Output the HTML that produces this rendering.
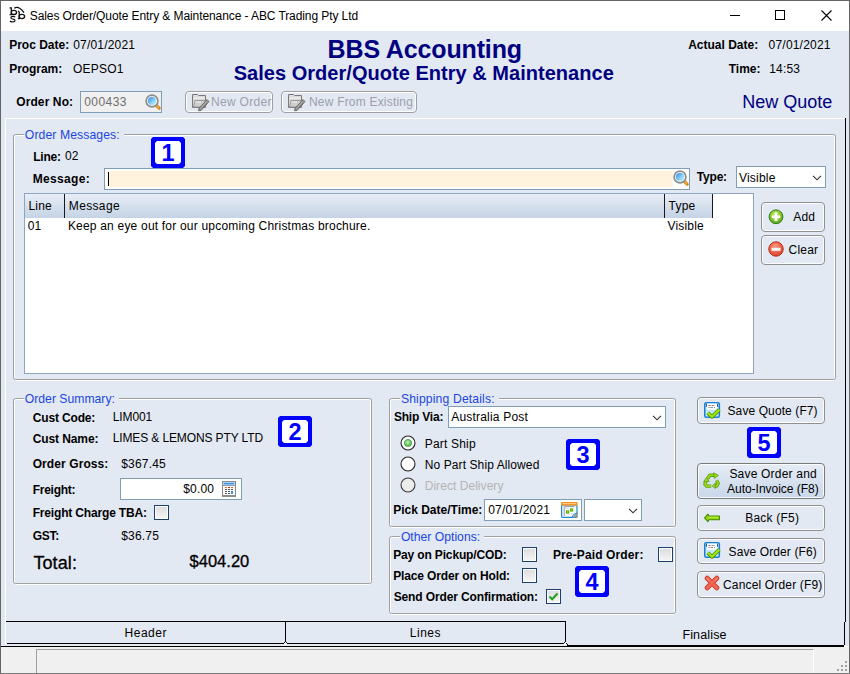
<!DOCTYPE html>
<html><head><meta charset="utf-8"><title>Sales Order</title><style>
html,body{margin:0;padding:0;}
body{width:850px;height:674px;position:relative;overflow:hidden;font-family:"Liberation Sans", sans-serif;background:#fff;}
.t{position:absolute;white-space:pre;line-height:1;font-family:"Liberation Sans", sans-serif;}
.badge{position:absolute;width:34px;height:31px;background:#0000ff;clip-path:polygon(2px 0,32px 0,34px 2px,34px 29px,32px 31px,2px 31px,0 29px,0 2px);}
.badge i{position:absolute;left:4px;top:4px;width:26px;height:23px;background:#fff;clip-path:polygon(2px 0,24px 0,26px 2px,26px 21px,24px 23px,2px 23px,0 21px,0 2px);}
.badge span{position:absolute;left:0;right:0;top:5px;text-align:center;font-family:"Liberation Sans", sans-serif;font-weight:bold;font-size:23.5px;line-height:23px;color:#0000ff;}
</style></head><body>
<div style="position:absolute;left:0px;top:0px;width:850px;height:674px;background:#fff;"></div>
<div style="position:absolute;left:1px;top:31px;width:848px;height:615px;background:#e3e9f3;"></div>
<div style="position:absolute;left:1px;top:647px;width:848px;height:26px;background:#f0f0f0;"></div>
<div style="position:absolute;left:0px;top:0px;width:850px;height:1px;background:#646464;"></div>
<div style="position:absolute;left:0px;top:0px;width:1px;height:674px;background:#646464;"></div>
<div style="position:absolute;left:849px;top:0px;width:1px;height:674px;background:#646464;"></div>
<div style="position:absolute;left:0px;top:673px;width:850px;height:1px;background:#7a7a7a;"></div>
<svg style="position:absolute;left:6px;top:4px" width="24" height="22" viewBox="0 0 24 22">
<g fill="none" stroke="#111" stroke-width="1.3">
<path d="M3.6 3.9 H5.3 V10.6 H3.6"/>
<ellipse cx="7.9" cy="8.4" rx="2.6" ry="2.1"/>
<path d="M13.2 7.4 H11.9 M13.2 7.4 V14.7 H11.9"/>
<ellipse cx="15.9" cy="12.5" rx="2.7" ry="2.1"/>
<path d="M8.2 4.3 Q12.5 1.2 18 8.6"/>
<path d="M9.2 13.1 Q8.2 12.3 6.6 12.4 Q4.6 12.7 5 14 Q5.6 15 8 15.4 Q9.3 16 8.8 17.1 Q8.2 18 6.2 17.9 Q4.6 17.8 3.9 17"/>
</g></svg>
<div class="t" style="left:29.80px;top:10px;font-size:12px;font-weight:normal;color:#000;letter-spacing:-0.09px;">Sales Order/Quote Entry &amp; Maintenance - ABC Trading Pty Ltd</div>
<div style="position:absolute;left:730px;top:15px;width:10px;height:1px;background:#000;"></div>
<div style="position:absolute;left:775px;top:10px;width:10px;height:10px;border:1px solid #000;box-sizing:border-box;"></div>
<svg style="position:absolute;left:820px;top:9px" width="13" height="13"><path d="M1.5 1.5 L11.5 11.5 M11.5 1.5 L1.5 11.5" stroke="#000" stroke-width="1.1"/></svg>
<div class="t" style="left:9.20px;top:39px;font-size:12px;font-weight:bold;color:#000;letter-spacing:0px;">Proc Date:</div>
<div class="t" style="left:73.20px;top:39px;font-size:12px;font-weight:normal;color:#000;letter-spacing:0.2px;">07/01/2021</div>
<div class="t" style="left:9.20px;top:63px;font-size:12px;font-weight:bold;color:#000;letter-spacing:-0.05px;">Program:</div>
<div class="t" style="left:73.00px;top:63px;font-size:12px;font-weight:normal;color:#000;letter-spacing:0.2px;">OEPSO1</div>
<div class="t" style="left:327.60px;top:37px;font-size:25px;font-weight:bold;color:#000080;letter-spacing:-0.14px;">BBS Accounting</div>
<div class="t" style="left:233.70px;top:63px;font-size:20px;font-weight:bold;color:#000080;letter-spacing:0.03px;">Sales Order/Quote Entry &amp; Maintenance</div>
<div class="t" style="left:688.20px;top:39px;font-size:12px;font-weight:bold;color:#000;letter-spacing:0px;">Actual Date:</div>
<div class="t" style="left:768.60px;top:39px;font-size:12px;font-weight:normal;color:#000;letter-spacing:0.2px;">07/01/2021</div>
<div class="t" style="left:728.70px;top:63px;font-size:12px;font-weight:bold;color:#000;letter-spacing:0px;">Time:</div>
<div class="t" style="left:769.20px;top:63px;font-size:12px;font-weight:normal;color:#000;letter-spacing:0.2px;">14:53</div>
<div class="t" style="left:742.20px;top:93px;font-size:18px;font-weight:normal;color:#000080;">New Quote</div>
<div class="t" style="left:16.20px;top:96px;font-size:12px;font-weight:bold;color:#000;letter-spacing:0.11px;">Order No:</div>
<div style="position:absolute;left:80px;top:91px;width:82px;height:22px;border:1px solid #7f9db9;background:#f0f0f0;box-sizing:border-box;"></div>
<div class="t" style="left:84.20px;top:96px;font-size:12px;font-weight:normal;color:#6d6d6d;letter-spacing:0.45px;">000433</div>
<svg style="position:absolute;left:144px;top:93px" width="18" height="18" viewBox="0 0 18 18">
<defs><linearGradient id="mg152" x1="0" y1="0" x2="1" y2="1"><stop offset="0" stop-color="#2f86dc"/><stop offset="0.6" stop-color="#8fd4f8"/><stop offset="1" stop-color="#c8f4ff"/></linearGradient></defs>
<path d="M12.3 12.3 L15.2 15.2" stroke="#d8861a" stroke-width="3.2" stroke-linecap="round"/>
<path d="M12.6 12.6 L14.6 14.6" stroke="#f4b040" stroke-width="1.4" stroke-linecap="round"/>
<circle cx="8" cy="8" r="5.9" fill="#fff" stroke="#8c8c8c" stroke-width="1.7"/>
<circle cx="8" cy="8" r="4.3" fill="url(#mg152)"/>
</svg>
<div style="position:absolute;left:185px;top:91px;width:88px;height:22px;border:1px solid #a0a0a0;border-radius:4px;box-sizing:border-box;box-shadow:inset 0 0 0 1px #fff;"></div>
<svg style="position:absolute;left:189px;top:92px" width="22" height="20" viewBox="0 0 22 20">
<path d="M3.5 2.5 H8.5 L9.5 3.5 H16.5 V15.5 H3.5 Z" fill="#dadada" stroke="#7a7a7a" stroke-width="1"/>
<path d="M5 6 H15.5" stroke="#f4f4f4" stroke-width="1.2"/>
<path d="M4.5 15 L6 8.5 H18.5 L16.5 15 Z" fill="#cdcdcd" stroke="#8a8a8a" stroke-width="0.8"/>
<path d="M6.5 10 H12" stroke="#f0f0f0" stroke-width="1"/>
<path d="M10 16.5 L18 7.5 L20 9.5 L12 18.5 L9.5 18.8 Z" fill="#8a8a8a" stroke="#5a5a5a" stroke-width="0.8"/>
<path d="M11 16.8 L18.8 8.4" stroke="#c8c8c8" stroke-width="0.8"/>
</svg>
<div class="t" style="left:211.00px;top:96px;font-size:12px;font-weight:normal;color:#9c9eac;letter-spacing:0.3px;">New Order</div>
<div style="position:absolute;left:281px;top:91px;width:136px;height:22px;border:1px solid #a0a0a0;border-radius:4px;box-sizing:border-box;box-shadow:inset 0 0 0 1px #fff;"></div>
<svg style="position:absolute;left:285px;top:92px" width="22" height="20" viewBox="0 0 22 20">
<path d="M3.5 2.5 H8.5 L9.5 3.5 H16.5 V15.5 H3.5 Z" fill="#dadada" stroke="#7a7a7a" stroke-width="1"/>
<path d="M5 6 H15.5" stroke="#f4f4f4" stroke-width="1.2"/>
<path d="M4.5 15 L6 8.5 H18.5 L16.5 15 Z" fill="#cdcdcd" stroke="#8a8a8a" stroke-width="0.8"/>
<path d="M6.5 10 H12" stroke="#f0f0f0" stroke-width="1"/>
<path d="M10 16.5 L18 7.5 L20 9.5 L12 18.5 L9.5 18.8 Z" fill="#8a8a8a" stroke="#5a5a5a" stroke-width="0.8"/>
<path d="M11 16.8 L18.8 8.4" stroke="#c8c8c8" stroke-width="0.8"/>
</svg>
<div class="t" style="left:309.00px;top:96px;font-size:12px;font-weight:normal;color:#9c9eac;letter-spacing:0.2px;">New From Existing</div>
<div style="position:absolute;left:5px;top:118px;width:841px;height:1px;background:#fff;"></div>
<div style="position:absolute;left:5px;top:118px;width:1px;height:526px;background:#fff;"></div>
<div style="position:absolute;left:845px;top:118px;width:1px;height:504px;background:#000;"></div>
<div style="position:absolute;left:14px;top:135px;width:821px;height:246px;border:1px solid #fff;border-radius:2.5px;box-sizing:border-box;"></div>
<div style="position:absolute;left:13px;top:134px;width:823px;height:246px;border:1px solid #a0a0a0;border-radius:2.5px;box-sizing:border-box;"></div>
<div style="position:absolute;left:23.6px;top:132px;width:100.4px;height:5px;background:#e3e9f3;"></div>
<div class="t" style="left:24.80px;top:129px;font-size:12.2px;font-weight:normal;color:#1c46e2;letter-spacing:0.1px;">Order Messages:</div>
<div class="t" style="left:33.20px;top:151px;font-size:12px;font-weight:bold;color:#000;letter-spacing:-0.2px;">Line:</div>
<div class="t" style="left:65.00px;top:150px;font-size:12px;font-weight:normal;color:#000;letter-spacing:0.2px;">02</div>
<div class="badge" style="left:151px;top:137px;"><i></i><span>1</span></div>
<div class="t" style="left:32.70px;top:173px;font-size:12px;font-weight:bold;color:#000;letter-spacing:0.34px;">Message:</div>
<div style="position:absolute;left:104px;top:168px;width:586px;height:22px;border:1px solid #7f9db9;background:#fff;box-sizing:border-box;"></div>
<div style="position:absolute;left:107px;top:171px;width:566px;height:16px;background:#fff3de;"></div>
<div style="position:absolute;left:108px;top:172px;width:1px;height:14px;background:#000;"></div>
<svg style="position:absolute;left:671.7px;top:169.4px" width="18" height="18" viewBox="0 0 18 18">
<defs><linearGradient id="mg679.7" x1="0" y1="0" x2="1" y2="1"><stop offset="0" stop-color="#2f86dc"/><stop offset="0.6" stop-color="#8fd4f8"/><stop offset="1" stop-color="#c8f4ff"/></linearGradient></defs>
<path d="M12.3 12.3 L15.2 15.2" stroke="#d8861a" stroke-width="3.2" stroke-linecap="round"/>
<path d="M12.6 12.6 L14.6 14.6" stroke="#f4b040" stroke-width="1.4" stroke-linecap="round"/>
<circle cx="8" cy="8" r="5.9" fill="#fff" stroke="#8c8c8c" stroke-width="1.7"/>
<circle cx="8" cy="8" r="4.3" fill="url(#mg679.7)"/>
</svg>
<div class="t" style="left:696.80px;top:171px;font-size:12px;font-weight:bold;color:#000;letter-spacing:-0.2px;">Type:</div>
<div style="position:absolute;left:736px;top:166px;width:90px;height:22px;border:1px solid #7f9db9;background:#fff;box-sizing:border-box;"></div>
<div class="t" style="left:739.00px;top:172px;font-size:12px;font-weight:normal;color:#000;letter-spacing:0.2px;">Visible</div>
<svg style="position:absolute;left:811px;top:174px" width="12" height="8"><path d="M2 1.8 L6 5.8 L10 1.8" fill="none" stroke="#333" stroke-width="1.15"/></svg>
<div style="position:absolute;left:24px;top:193px;width:730px;height:181px;border:1px solid #8da5c2;background:#fff;box-sizing:border-box;"></div>
<div style="position:absolute;left:25px;top:194px;width:688px;height:24px;background:linear-gradient(#e8eef7,#c4d3e5);"></div>
<div style="position:absolute;left:64px;top:194px;width:1px;height:24px;background:#1a1a1a;"></div>
<div style="position:absolute;left:664px;top:194px;width:1px;height:24px;background:#1a1a1a;"></div>
<div style="position:absolute;left:712px;top:194px;width:1px;height:24px;background:#1a1a1a;"></div>
<div class="t" style="left:28.50px;top:200px;font-size:12px;font-weight:normal;color:#000;letter-spacing:0.2px;">Line</div>
<div class="t" style="left:68.80px;top:200px;font-size:12px;font-weight:normal;color:#000;letter-spacing:0.35px;">Message</div>
<div class="t" style="left:668.60px;top:200px;font-size:12px;font-weight:normal;color:#000;letter-spacing:0.2px;">Type</div>
<div class="t" style="left:27.70px;top:220px;font-size:12px;font-weight:normal;color:#000;letter-spacing:0.2px;">01</div>
<div class="t" style="left:67.90px;top:220px;font-size:12px;font-weight:normal;color:#000;letter-spacing:0.2px;">Keep an eye out for our upcoming Christmas brochure.</div>
<div class="t" style="left:667.40px;top:220px;font-size:12px;font-weight:normal;color:#000;letter-spacing:0.2px;">Visible</div>
<div style="position:absolute;left:761px;top:202px;width:64px;height:30px;border:1px solid #909090;border-radius:4px;box-sizing:border-box;background:#e3e9f3;box-shadow:inset 0 0 0 1px #fbfcfe;"></div>
<svg style="position:absolute;left:768px;top:209px" width="16" height="16"><defs><radialGradient id="ga" cx="0.45" cy="0.35" r="0.65"><stop offset="0" stop-color="#c4f060"/><stop offset="1" stop-color="#58a818"/></radialGradient></defs>
<circle cx="8" cy="7.8" r="6.9" fill="url(#ga)" stroke="#2f7a0c" stroke-width="1"/><path d="M3.8 7.8 H12.2 M8 3.6 V12" stroke="#fff" stroke-width="2.8"/></svg>
<div class="t" style="left:793.20px;top:211px;font-size:12px;font-weight:normal;color:#000;letter-spacing:0.2px;">Add</div>
<div style="position:absolute;left:761px;top:235px;width:64px;height:30px;border:1px solid #909090;border-radius:4px;box-sizing:border-box;background:#e3e9f3;box-shadow:inset 0 0 0 1px #fbfcfe;"></div>
<svg style="position:absolute;left:767.6px;top:241.2px" width="16" height="16"><defs><radialGradient id="gc" cx="0.45" cy="0.35" r="0.65"><stop offset="0" stop-color="#ff9c84"/><stop offset="1" stop-color="#de3f28"/></radialGradient></defs>
<circle cx="8" cy="8" r="7.2" fill="url(#gc)" stroke="#b02c18" stroke-width="1"/><path d="M3.5 8.3 H12.5" stroke="#fff" stroke-width="3"/></svg>
<div class="t" style="left:788.60px;top:244px;font-size:12px;font-weight:normal;color:#000;letter-spacing:0.2px;">Clear</div>
<div style="position:absolute;left:14px;top:399px;width:357px;height:186px;border:1px solid #fff;border-radius:2.5px;box-sizing:border-box;"></div>
<div style="position:absolute;left:13px;top:398px;width:359px;height:186px;border:1px solid #a0a0a0;border-radius:2.5px;box-sizing:border-box;"></div>
<div style="position:absolute;left:23.6px;top:396px;width:95.8px;height:5px;background:#e3e9f3;"></div>
<div class="t" style="left:24.80px;top:393px;font-size:12.2px;font-weight:normal;color:#1c46e2;letter-spacing:0px;">Order Summary:</div>
<div class="t" style="left:32.70px;top:412px;font-size:12px;font-weight:bold;color:#000;letter-spacing:-0.15px;">Cust Code:</div>
<div class="t" style="left:112.70px;top:411px;font-size:12px;font-weight:normal;color:#000;letter-spacing:-0.1px;">LIM001</div>
<div class="t" style="left:32.70px;top:433px;font-size:12px;font-weight:bold;color:#000;letter-spacing:-0.1px;">Cust Name:</div>
<div class="t" style="left:112.70px;top:432px;font-size:12px;font-weight:normal;color:#000;letter-spacing:-0.12px;">LIMES &amp; LEMONS PTY LTD</div>
<div class="badge" style="left:278px;top:416px;"><i></i><span>2</span></div>
<div class="t" style="left:32.70px;top:458px;font-size:12px;font-weight:bold;color:#000;letter-spacing:0.09px;">Order Gross:</div>
<div class="t" style="left:121.20px;top:458px;font-size:12px;font-weight:normal;color:#000;letter-spacing:0.2px;">$367.45</div>
<div class="t" style="left:32.70px;top:484px;font-size:12px;font-weight:bold;color:#000;letter-spacing:-0.25px;">Freight:</div>
<div style="position:absolute;left:120px;top:478px;width:122px;height:22px;border:1px solid #7f9db9;background:#fff;box-sizing:border-box;"></div>
<div class="t" style="left:183.20px;top:483px;font-size:12px;font-weight:normal;color:#000;letter-spacing:0.2px;">$0.00</div>
<svg style="position:absolute;left:222px;top:481px" width="14" height="16" viewBox="0 0 14 16">
<rect x="0" y="0" width="14" height="16" fill="#8c8c8c"/>
<rect x="1" y="1" width="12" height="3.2" fill="#a6d4ff"/>
<rect x="2" y="2" width="10" height="1.2" fill="#3d8fe0"/>
<rect x="1" y="5" width="12" height="9" fill="#fbfbfb"/>
<g fill="#555"><rect x="6" y="6" width="2" height="1"/>
<rect x="3" y="8" width="2" height="1"/><rect x="6" y="8" width="2" height="1"/><rect x="9" y="8" width="2" height="1"/>
<rect x="3" y="10" width="2" height="1"/><rect x="6" y="10" width="2" height="1"/>
<rect x="3" y="12" width="2" height="1"/><rect x="6" y="12" width="2" height="1"/></g>
<rect x="3" y="6" width="2" height="1" fill="#ff6a10"/><rect x="9" y="6" width="2" height="1" fill="#ff6a10"/>
<rect x="9" y="10" width="2" height="3" fill="#3a8ee8"/>
</svg>
<div class="t" style="left:32.70px;top:507px;font-size:12px;font-weight:bold;color:#000;letter-spacing:-0.17px;">Freight Charge TBA:</div>
<div style="position:absolute;left:154px;top:505px;width:15px;height:15px;border:1px solid #1c3f6e;background:linear-gradient(#dcdcdc,#f6f6f6);box-sizing:border-box;"></div>
<div style="position:absolute;left:155px;top:506px;width:13px;height:13px;border:1px solid #fff;box-sizing:border-box;"></div>
<div class="t" style="left:32.70px;top:530px;font-size:12px;font-weight:bold;color:#000;letter-spacing:-0.3px;">GST:</div>
<div class="t" style="left:121.20px;top:530px;font-size:12px;font-weight:normal;color:#000;letter-spacing:0.2px;">$36.75</div>
<div class="t" style="left:33.40px;top:554px;font-size:18px;font-weight:normal;color:#000;letter-spacing:0.1px;-webkit-text-stroke:0.3px #000;">Total:</div>
<div class="t" style="left:189.60px;top:553px;font-size:16.5px;font-weight:normal;color:#000;-webkit-text-stroke:0.3px #000;">$404.20</div>
<div style="position:absolute;left:390px;top:399px;width:285px;height:129px;border:1px solid #fff;border-radius:2.5px;box-sizing:border-box;"></div>
<div style="position:absolute;left:389px;top:398px;width:287px;height:129px;border:1px solid #a0a0a0;border-radius:2.5px;box-sizing:border-box;"></div>
<div style="position:absolute;left:399.7px;top:396px;width:99.3px;height:5px;background:#e3e9f3;"></div>
<div class="t" style="left:400.90px;top:393px;font-size:12.2px;font-weight:normal;color:#1c46e2;letter-spacing:0.14px;">Shipping Details:</div>
<div class="t" style="left:393.90px;top:411px;font-size:12px;font-weight:bold;color:#000;letter-spacing:-0.2px;">Ship Via:</div>
<div style="position:absolute;left:448px;top:406px;width:218px;height:22px;border:1px solid #7f9db9;background:#fff;box-sizing:border-box;"></div>
<div class="t" style="left:451.20px;top:411px;font-size:12px;font-weight:normal;color:#000;letter-spacing:0.2px;">Australia Post</div>
<svg style="position:absolute;left:651px;top:414px" width="12" height="8"><path d="M2 1.8 L6 5.8 L10 1.8" fill="none" stroke="#333" stroke-width="1.15"/></svg>
<div class="badge" style="left:566px;top:439px;"><i></i><span>3</span></div>
<svg style="position:absolute;left:400.2px;top:435.3px" width="16" height="16"><circle cx="8" cy="8" r="7" fill="#fff" stroke="#222" stroke-width="1.1"/><defs><radialGradient id="rg" cx="0.45" cy="0.4" r="0.6"><stop offset="0" stop-color="#c8f0c0"/><stop offset="1" stop-color="#3fae3a"/></radialGradient></defs><circle cx="8" cy="8" r="3.6" fill="url(#rg)" stroke="#3a9a35" stroke-width="0.7"/></svg>
<div class="t" style="left:424.70px;top:438px;font-size:12px;font-weight:normal;color:#000;letter-spacing:0.2px;">Part Ship</div>
<svg style="position:absolute;left:400.2px;top:456.3px" width="16" height="16"><circle cx="8" cy="8" r="7" fill="#fff" stroke="#222" stroke-width="1.1"/></svg>
<div class="t" style="left:424.70px;top:459px;font-size:12px;font-weight:normal;color:#000;letter-spacing:0.1px;">No Part Ship Allowed</div>
<svg style="position:absolute;left:400.2px;top:477.3px" width="16" height="16"><circle cx="8" cy="8" r="7" fill="#ececec" stroke="#3a3a3a" stroke-width="1.1"/></svg>
<div class="t" style="left:424.70px;top:480px;font-size:12px;font-weight:normal;color:#b4b4b4;letter-spacing:0.05px;">Direct Delivery</div>
<div class="t" style="left:393.20px;top:504px;font-size:12px;font-weight:bold;color:#000;letter-spacing:0px;">Pick Date/Time:</div>
<div style="position:absolute;left:484px;top:499px;width:98px;height:22px;border:1px solid #7f9db9;background:#fff;box-sizing:border-box;"></div>
<div class="t" style="left:488.20px;top:504px;font-size:12px;font-weight:normal;color:#000;letter-spacing:0.2px;">07/01/2021</div>
<svg style="position:absolute;left:561px;top:502px" width="17" height="16" viewBox="0 0 17 16">
<rect x="0.6" y="3" width="15.4" height="12.4" rx="1" fill="#f4fcff" stroke="#1f86d0" stroke-width="1.2"/>
<rect x="0" y="0" width="16.6" height="3.6" rx="1" fill="#f7941d"/>
<rect x="1.5" y="1.2" width="13.5" height="0.9" fill="#ffd49a"/>
<path d="M3.2 14 V4.6 H13.5" fill="none" stroke="#9a9a9a" stroke-width="1"/>
<g fill="#c8c0e8"><rect x="4.5" y="6" width="1" height="1"/><rect x="6.5" y="6" width="1" height="1"/><rect x="4.5" y="8" width="1" height="1"/><rect x="4.5" y="10" width="1" height="1"/><rect x="6.5" y="11.5" width="1" height="1"/><rect x="10.5" y="11" width="1" height="1"/></g>
<rect x="5" y="8.4" width="3.2" height="3.2" fill="#5fb000"/><rect x="6.1" y="9.5" width="1" height="1" fill="#d8f040"/>
<rect x="9" y="6.4" width="3.2" height="3.2" fill="#5fb000"/><rect x="10.1" y="7.5" width="1" height="1" fill="#d8f040"/>
<path d="M11 15.6 L16.6 10 V15.6 Z" fill="#9a9a9a"/>
<path d="M11 15.6 Q11.5 11.5 16 11" fill="none" stroke="#1f86d0" stroke-width="1"/>
</svg>
<div style="position:absolute;left:584px;top:499px;width:58px;height:22px;border:1px solid #7f9db9;background:#fff;box-sizing:border-box;"></div>
<svg style="position:absolute;left:627px;top:507px" width="12" height="8"><path d="M2 1.8 L6 5.8 L10 1.8" fill="none" stroke="#333" stroke-width="1.15"/></svg>
<div style="position:absolute;left:390px;top:537px;width:285px;height:78px;border:1px solid #fff;border-radius:2.5px;box-sizing:border-box;"></div>
<div style="position:absolute;left:389px;top:536px;width:287px;height:78px;border:1px solid #a0a0a0;border-radius:2.5px;box-sizing:border-box;"></div>
<div style="position:absolute;left:399.7px;top:534px;width:84.3px;height:5px;background:#e3e9f3;"></div>
<div class="t" style="left:400.90px;top:531px;font-size:12.2px;font-weight:normal;color:#1c46e2;letter-spacing:0px;">Other Options:</div>
<div class="t" style="left:393.20px;top:549px;font-size:12px;font-weight:bold;color:#000;letter-spacing:-0.15px;">Pay on Pickup/COD:</div>
<div style="position:absolute;left:522px;top:547px;width:15px;height:15px;border:1px solid #1c3f6e;background:linear-gradient(#dcdcdc,#f6f6f6);box-sizing:border-box;"></div>
<div style="position:absolute;left:523px;top:548px;width:13px;height:13px;border:1px solid #fff;box-sizing:border-box;"></div>
<div class="t" style="left:552.90px;top:549px;font-size:12px;font-weight:bold;color:#000;letter-spacing:0.13px;">Pre-Paid Order:</div>
<div style="position:absolute;left:658px;top:547px;width:15px;height:15px;border:1px solid #1c3f6e;background:linear-gradient(#dcdcdc,#f6f6f6);box-sizing:border-box;"></div>
<div style="position:absolute;left:659px;top:548px;width:13px;height:13px;border:1px solid #fff;box-sizing:border-box;"></div>
<div class="t" style="left:393.20px;top:570px;font-size:12px;font-weight:bold;color:#000;letter-spacing:-0.13px;">Place Order on Hold:</div>
<div style="position:absolute;left:522px;top:568px;width:15px;height:15px;border:1px solid #1c3f6e;background:linear-gradient(#dcdcdc,#f6f6f6);box-sizing:border-box;"></div>
<div style="position:absolute;left:523px;top:569px;width:13px;height:13px;border:1px solid #fff;box-sizing:border-box;"></div>
<div class="t" style="left:393.70px;top:591px;font-size:12px;font-weight:bold;color:#000;letter-spacing:-0.13px;">Send Order Confirmation:</div>
<div style="position:absolute;left:546px;top:589px;width:15px;height:15px;border:1px solid #1c3f6e;background:linear-gradient(#dcdcdc,#f6f6f6);box-sizing:border-box;"></div>
<div style="position:absolute;left:547px;top:590px;width:13px;height:13px;border:1px solid #fff;box-sizing:border-box;"></div>
<svg style="position:absolute;left:546px;top:589px" width="15" height="15"><path d="M3.5 7.5 L6.2 10.2 L11.5 4.5" fill="none" stroke="#20a020" stroke-width="2"/></svg>
<div class="badge" style="left:575px;top:566px;"><i></i><span>4</span></div>
<div style="position:absolute;left:697px;top:397px;width:128px;height:27px;border:1px solid #909090;border-radius:4px;box-sizing:border-box;background:#e3e9f3;box-shadow:inset 0 0 0 1px #fbfcfe;"></div>
<svg style="position:absolute;left:704px;top:402px" width="17" height="17" viewBox="0 0 17 17">
<rect x="0.75" y="0.75" width="14.6" height="14.6" rx="1.5" fill="#c4e6fd" stroke="#1a7fd0" stroke-width="1.5"/>
<rect x="2.9" y="1.4" width="10.3" height="6.4" rx="1" fill="#fff"/>
<rect x="2.1" y="2.1" width="0.9" height="2.6" fill="#15437a"/><rect x="13.1" y="2.1" width="0.9" height="2.6" fill="#15437a"/>
<g fill="#777"><rect x="4.2" y="3" width="2.6" height="0.8"/><rect x="7.6" y="3" width="2.8" height="0.8"/><rect x="4.2" y="5.2" width="1.4" height="0.8"/><rect x="6.4" y="5.2" width="2.6" height="0.8"/><rect x="10" y="5.2" width="1" height="0.8"/></g>
<path d="M4.6 13 L6 13.5 H10.5 L12 13" stroke="#fff" stroke-width="1" fill="none"/>
<path d="M3.8 10.8 L8 14.8 L15.3 7.6" fill="none" stroke="#3f9a00" stroke-width="3.8" stroke-linejoin="round"/>
<path d="M3.8 10.8 L8 14.8 L15.3 7.6" fill="none" stroke="#a4e012" stroke-width="2.2" stroke-linejoin="round"/>
</svg>
<div class="t" style="left:727.50px;top:405px;font-size:12px;font-weight:normal;color:#000;letter-spacing:0.1px;">Save Quote (F7)</div>
<div class="badge" style="left:747px;top:427px;"><i></i><span>5</span></div>
<div style="position:absolute;left:697px;top:463px;width:128px;height:36px;border:1px solid #909090;border-radius:4px;box-sizing:border-box;background:#e3e9f3;box-shadow:inset 0 0 0 1px #fbfcfe;background:linear-gradient(#e6ecf5,#c9d7ea);border-color:#7a7a7a;"></div>
<svg style="position:absolute;left:703px;top:472px" width="17" height="17" viewBox="0 0 17 17">
<g fill="none" stroke-linejoin="round">
<path d="M4.6 6.8 L6.8 3.2 H11.2" stroke="#5a9e10" stroke-width="3.4"/>
<path d="M4.6 6.8 L6.8 3.2 H11.2" stroke="#9ad81c" stroke-width="1.8"/>
<path d="M2.8 9.6 L1.9 12.2 L3.6 14.1 H8.2" stroke="#5a9e10" stroke-width="3.4"/>
<path d="M2.8 9.6 L1.9 12.2 L3.6 14.1 H8.2" stroke="#9ad81c" stroke-width="1.8"/>
<path d="M13.6 8.2 L15.2 11.4 L13.6 14.1 H12" stroke="#5a9e10" stroke-width="3.4"/>
<path d="M13.6 8.2 L15.2 11.4 L13.6 14.1 H12" stroke="#9ad81c" stroke-width="1.8"/>
</g>
<g fill="#9ad81c" stroke="#5a9e10" stroke-width="0.8" stroke-linejoin="round">
<path d="M10.6 0.8 L15.4 3.4 L11.4 6.6 Z"/>
<path d="M0.6 9.8 L3.4 5.6 L6.2 9.4 Z"/>
<path d="M12.4 11 L12.4 16.6 L9.2 14 Z"/>
</g></svg>
<div class="t" style="left:729.40px;top:468px;font-size:12px;font-weight:normal;color:#000;letter-spacing:0.2px;">Save Order and</div>
<div class="t" style="left:727.00px;top:483px;font-size:12px;font-weight:normal;color:#000;letter-spacing:-0.02px;">Auto-Invoice (F8)</div>
<div style="position:absolute;left:697px;top:505px;width:128px;height:26px;border:1px solid #909090;border-radius:4px;box-sizing:border-box;background:#e3e9f3;box-shadow:inset 0 0 0 1px #fbfcfe;"></div>
<svg style="position:absolute;left:704px;top:513px" width="17" height="10" viewBox="0 0 17 10">
<path d="M0.6 4.9 L4 1.1 L4.6 3 H15.4 V6.8 H4.6 L4 8.7 Z" fill="#98d810" stroke="#3e8c00" stroke-width="1.1" stroke-linejoin="round"/>
<path d="M4.5 4.2 H14.5" stroke="#c8f040" stroke-width="0.9"/>
</svg>
<div class="t" style="left:745.30px;top:512px;font-size:12px;font-weight:normal;color:#000;letter-spacing:0.2px;">Back (F5)</div>
<div style="position:absolute;left:697px;top:538px;width:128px;height:26px;border:1px solid #909090;border-radius:4px;box-sizing:border-box;background:#e3e9f3;box-shadow:inset 0 0 0 1px #fbfcfe;"></div>
<svg style="position:absolute;left:704px;top:542px" width="17" height="17" viewBox="0 0 17 17">
<rect x="0.75" y="0.75" width="14.6" height="14.6" rx="1.5" fill="#c4e6fd" stroke="#1a7fd0" stroke-width="1.5"/>
<rect x="2.9" y="1.4" width="10.3" height="6.4" rx="1" fill="#fff"/>
<rect x="2.1" y="2.1" width="0.9" height="2.6" fill="#15437a"/><rect x="13.1" y="2.1" width="0.9" height="2.6" fill="#15437a"/>
<g fill="#777"><rect x="4.2" y="3" width="2.6" height="0.8"/><rect x="7.6" y="3" width="2.8" height="0.8"/><rect x="4.2" y="5.2" width="1.4" height="0.8"/><rect x="6.4" y="5.2" width="2.6" height="0.8"/><rect x="10" y="5.2" width="1" height="0.8"/></g>
<path d="M4.6 13 L6 13.5 H10.5 L12 13" stroke="#fff" stroke-width="1" fill="none"/>
<path d="M3.8 10.8 L8 14.8 L15.3 7.6" fill="none" stroke="#3f9a00" stroke-width="3.8" stroke-linejoin="round"/>
<path d="M3.8 10.8 L8 14.8 L15.3 7.6" fill="none" stroke="#a4e012" stroke-width="2.2" stroke-linejoin="round"/>
</svg>
<div class="t" style="left:728.60px;top:546px;font-size:12px;font-weight:normal;color:#000;letter-spacing:0.1px;">Save Order (F6)</div>
<div style="position:absolute;left:697px;top:571px;width:128px;height:27px;border:1px solid #909090;border-radius:4px;box-sizing:border-box;background:#e3e9f3;box-shadow:inset 0 0 0 1px #fbfcfe;"></div>
<svg style="position:absolute;left:704px;top:575px" width="16" height="16" viewBox="0 0 16 16">
<path d="M3.2 3.2 L12.8 12.8 M12.8 3.2 L3.2 12.8" stroke="#c8402c" stroke-width="5" stroke-linecap="round"/>
<path d="M3.2 3.2 L12.8 12.8 M12.8 3.2 L3.2 12.8" stroke="#f26550" stroke-width="3.2" stroke-linecap="round"/>
<path d="M2.8 3.4 L5 5.6 M13.2 3.4 L11 5.6" stroke="#ffb0a0" stroke-width="1"/>
</svg>
<div class="t" style="left:723.00px;top:579px;font-size:12px;font-weight:normal;color:#000;letter-spacing:0.16px;">Cancel Order (F9)</div>
<div style="position:absolute;left:6px;top:621px;width:560px;height:1px;background:#000;"></div>
<div style="position:absolute;left:285px;top:621px;width:1px;height:21px;background:#000;"></div>
<div style="position:absolute;left:565px;top:621px;width:1px;height:21px;background:#000;"></div>
<div style="position:absolute;left:7px;top:643px;width:277px;height:1px;background:#000;"></div>
<div style="position:absolute;left:287px;top:643px;width:277px;height:1px;background:#000;"></div>
<div style="position:absolute;left:284px;top:642px;width:1px;height:1px;background:#000;"></div>
<div style="position:absolute;left:286px;top:642px;width:1px;height:1px;background:#000;"></div>
<div style="position:absolute;left:285px;top:642px;width:1px;height:1px;background:#f4f7fc;"></div>
<div style="position:absolute;left:284px;top:643px;width:3px;height:2px;background:#f4f7fc;"></div>
<div style="position:absolute;left:564px;top:642px;width:1px;height:1px;background:#000;"></div>
<div style="position:absolute;left:566px;top:643px;width:1px;height:1px;background:#000;"></div>
<div style="position:absolute;left:567px;top:644px;width:1px;height:1px;background:#000;"></div>
<div style="position:absolute;left:564px;top:643px;width:2px;height:2px;background:#f4f7fc;"></div>
<div style="position:absolute;left:1px;top:646px;width:566px;height:1px;background:#000;"></div>
<div style="position:absolute;left:567px;top:645px;width:277px;height:2px;background:#000;"></div>
<div style="position:absolute;left:844px;top:622px;width:1px;height:23px;background:#000;"></div>
<div class="t" style="left:124.60px;top:627px;font-size:12px;font-weight:normal;color:#000;letter-spacing:0.5px;">Header</div>
<div class="t" style="left:409.80px;top:627px;font-size:12px;font-weight:normal;color:#000;letter-spacing:0.5px;">Lines</div>
<div class="t" style="left:682.40px;top:629px;font-size:12.5px;font-weight:normal;color:#000;letter-spacing:0.15px;">Finalise</div>
<div style="position:absolute;left:36px;top:649px;width:778px;height:24px;border-top:1px solid #a0a0a0;border-left:1px solid #a0a0a0;border-right:1px solid #fff;box-sizing:border-box;"></div>
<div style="position:absolute;left:845px;top:661px;width:2px;height:2px;background:#a0a0a0;"></div>
<div style="position:absolute;left:841px;top:665px;width:2px;height:2px;background:#a0a0a0;"></div>
<div style="position:absolute;left:845px;top:665px;width:2px;height:2px;background:#a0a0a0;"></div>
<div style="position:absolute;left:837px;top:669px;width:2px;height:2px;background:#a0a0a0;"></div>
<div style="position:absolute;left:841px;top:669px;width:2px;height:2px;background:#a0a0a0;"></div>
<div style="position:absolute;left:845px;top:669px;width:2px;height:2px;background:#a0a0a0;"></div>
</body></html>
